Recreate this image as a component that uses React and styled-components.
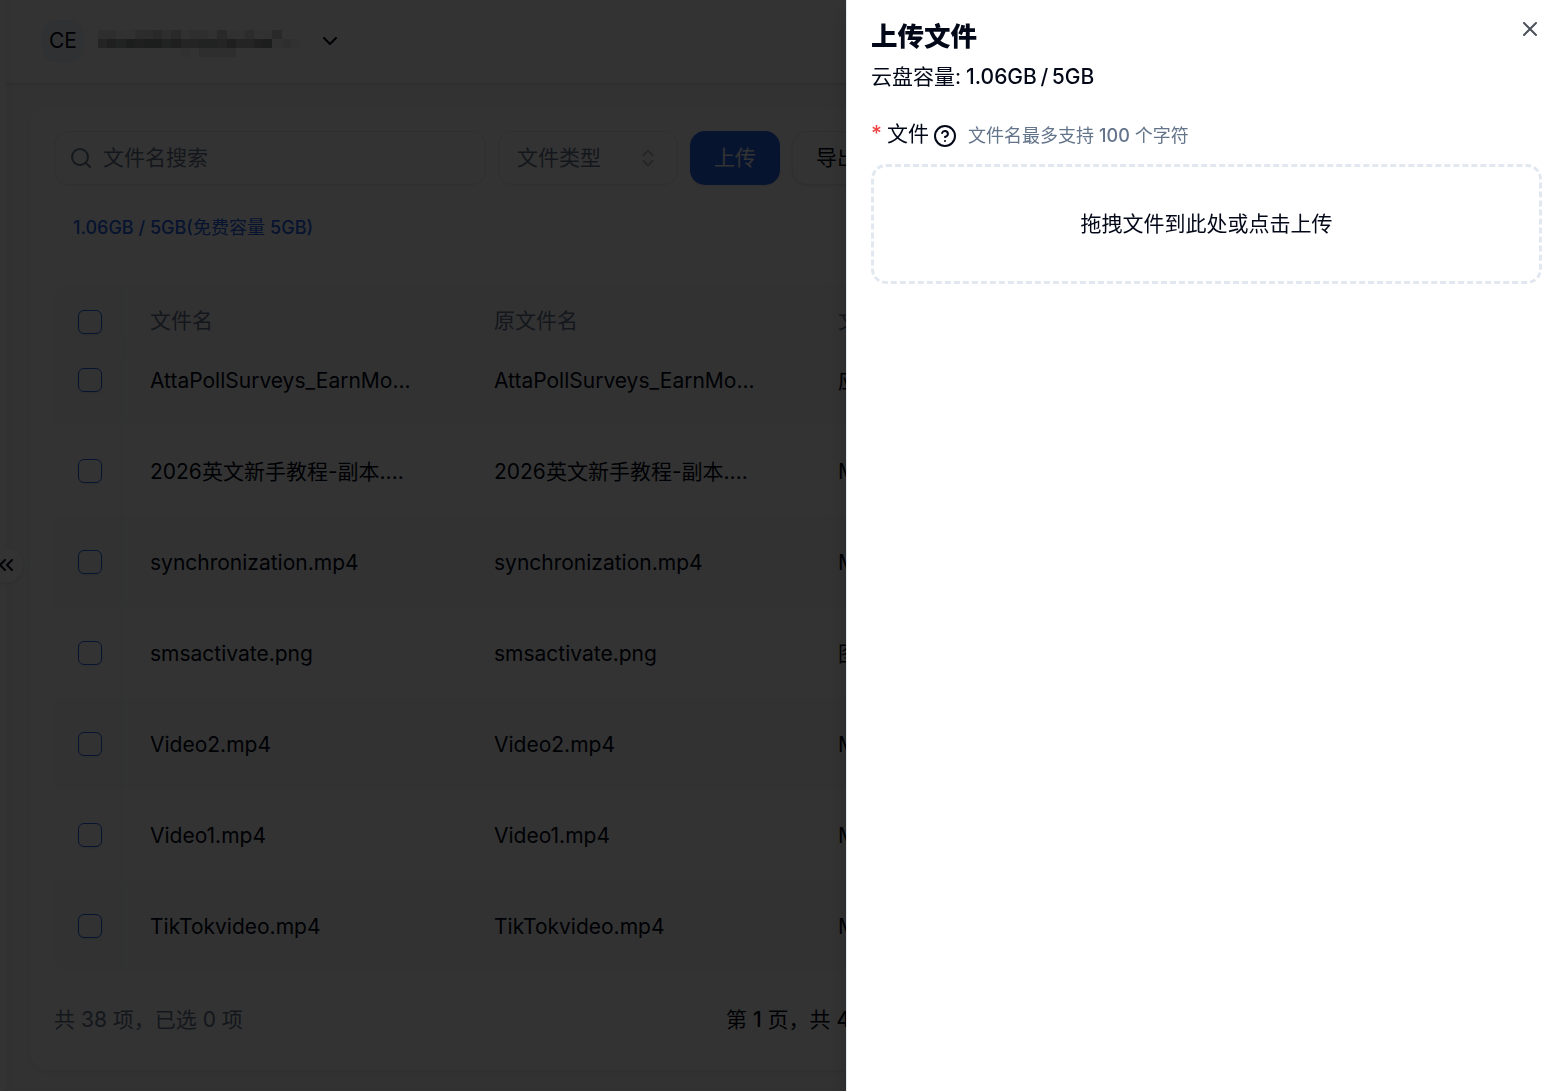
import React from "react";
import styled, { createGlobalStyle } from "styled-components";
import {
  ChevronDown,
  ChevronsLeft,
  ChevronsUpDown,
  CircleHelp,
  Search,
  X,
} from "lucide-react";

const GlobalStyle = createGlobalStyle`
  * {
    box-sizing: border-box;
  }
  body {
    margin: 0;
    overflow: hidden;
    background: #fff;
    color: #020817;
    font-family: Inter, "Noto Sans CJK SC", sans-serif;
    font-size: 21px;
    line-height: 30px;
  }
`;

const Page = styled.div`
  display: flex;
  width: 100vw;
  height: 100vh;
  overflow: hidden;
`;

const Sidebar = styled.aside`
  position: relative;
  flex: 0 0 6px;
  background: #fff;
  box-shadow: 3px 0 8px rgba(0, 0, 0, 0.06);
`;

const Main = styled.main`
  flex: 1;
  min-width: 0;
  display: flex;
  flex-direction: column;
  background: #f8fafc;
`;

const Header = styled.header`
  display: flex;
  align-items: center;
  flex: 0 0 83px;
  padding: 0 0 2px 36px;
  background: #fff;
  box-shadow: 0 1px 3px rgba(0, 0, 0, 0.16);
`;

const Avatar = styled.div`
  display: flex;
  align-items: center;
  justify-content: center;
  width: 42px;
  height: 42px;
  margin-right: 14px;
  border-radius: 14px;
  background: #f1f5f9;
`;

const Account = styled.div`
  display: grid;
  grid-template-columns: repeat(22, 1fr);
  grid-auto-rows: 9px;
  width: 202px;
  margin: 6px 18px 0 0;
`;

const Block = styled.span`
  background: rgba(15, 18, 24, ${(props) => props.$shade / 19});
`;

const Card = styled.section`
  flex: 1;
  display: flex;
  flex-direction: column;
  margin: 24px 24px 21px;
  padding: 24px;
  border-radius: 18px;
  background: #fff;
  box-shadow: 0 2px 6px rgba(0, 0, 0, 0.08);
`;

const Toolbar = styled.div`
  display: flex;
  gap: 12px;
`;

const Field = styled.div`
  display: flex;
  align-items: center;
  gap: 10px;
  width: ${(props) => props.$width}px;
  height: 54px;
  padding: 0 ${(props) => props.$pad}px;
  border: 1px solid #e2e8f0;
  border-radius: 15px;
  color: #64748b;
  box-shadow: 0 1px 2px rgba(0, 0, 0, 0.05);
`;

const FieldLabel = styled.span`
  flex: 1;
`;

const Button = styled.button`
  height: 54px;
  padding: 0 ${(props) => (props.$primary ? 24 : 23)}px;
  border: ${(props) => (props.$primary ? "0" : "1px solid #e2e8f0")};
  border-radius: 15px;
  background: ${(props) => (props.$primary ? "#2563eb" : "#fff")};
  color: ${(props) => (props.$primary ? "#f8fafc" : "#020817")};
  font: inherit;
  white-space: nowrap;
  box-shadow: 0 1px 3px rgba(0, 0, 0, 0.1);
`;

// Latin text sits at medium weight, the Chinese next to it stays regular
const Medium = styled.span`
  font-weight: 500;
`;

const Capacity = styled.div`
  margin: 29px 0 43px;
  padding-left: 19px;
  color: #2563eb;
  font-size: 18px;
  line-height: 27px;
`;

const Table = styled.div`
  flex: 0 0 686px;
  overflow: hidden;
  border-radius: 15px;
`;

const Row = styled.div`
  display: grid;
  grid-template-columns: 68px 344px 344px 344px;
  align-items: center;
  height: 91px;
  background: ${(props) => (props.$striped ? "#f8fafc" : "#fff")};
`;

const HeadRow = styled(Row)`
  height: 74px;
  margin-bottom: -24px;
  color: #64748b;
`;

const CheckCell = styled.div`
  display: flex;
  align-items: center;
  height: 100%;
  padding-left: 24px;
  border-right: 1px solid #f1f5f9;
  box-shadow: 3px 0 4px rgba(0, 0, 0, 0.02);
`;

const HeadCheckCell = styled(CheckCell)`
  padding-top: 2px;
`;

const Checkbox = styled.span`
  width: 24px;
  height: 24px;
  border: 1px solid #2563eb;
  border-radius: 6px;
  box-shadow: 0 1px 3px rgba(0, 0, 0, 0.1);
`;

const Cell = styled.div`
  padding: ${(props) => (props.$head ? 0 : 2)}px 0 0 28px;
  white-space: nowrap;
`;

const Footer = styled.footer`
  display: flex;
  justify-content: space-between;
  padding-top: 35px;
  color: #64748b;
`;

const PageInfo = styled.span`
  width: 792px;
  color: #020817;
`;

const Collapse = styled.div`
  position: absolute;
  top: 547px;
  left: -12px;
  display: flex;
  align-items: center;
  justify-content: center;
  width: 36px;
  height: 36px;
  border: 1px solid #f1f5f9;
  border-radius: 50%;
  background: #fff;
  box-shadow: 0 1px 3px rgba(0, 0, 0, 0.1);
`;

const Overlay = styled.div`
  position: fixed;
  inset: 0;
  background: rgba(0, 0, 0, 0.8);
`;

const Drawer = styled.aside`
  position: fixed;
  top: 0;
  right: 0;
  bottom: 0;
  width: 720px;
  padding: 20px 24px 24px;
  border-left: 1px solid #e2e8f0;
  background: #fff;
  box-shadow: 0 10px 22px rgba(0, 0, 0, 0.2);
`;

const Title = styled.h2`
  margin: 0;
  font-size: 26.5px;
  line-height: 32px;
  font-weight: 800;
`;

const Usage = styled.div`
  display: flex;
  gap: 5px;
  margin-top: 10px;
`;

const UsageValue = styled(Medium)`
  word-spacing: -2px;
`;

const Label = styled.div`
  display: flex;
  align-items: center;
  margin-top: 27px;
  height: 30px;
`;

const Required = styled.span`
  width: 16px;
  color: #ef4444;
  font-weight: 500;
`;

const HelpIcon = styled(CircleHelp)`
  margin: 4px 0 0 4px;
`;

const Hint = styled.span`
  margin: 3px 0 0 11px;
  color: #64748b;
  font-size: 18px;
`;

const DropZone = styled.div`
  display: flex;
  align-items: center;
  justify-content: center;
  height: 120px;
  margin-top: 15px;
  border: 3px dashed #e2e8f0;
  border-radius: 15px;
`;

const Close = styled.button`
  position: absolute;
  top: 17px;
  right: 24px;
  display: flex;
  padding: 0;
  border: 0;
  background: none;
  color: #020817;
  opacity: 0.7;
`;

// pixelated account name, one digit per block
const mosaic = [
  "2211334241221411311400",
  "6879899786677686689121",
  "0000000001022220000000",
];

const files = [
  ["AttaPollSurveys_EarnMo...", "应用"],
  ["2026英文新手教程-副本....", "MP4"],
  ["synchronization.mp4", "MP4"],
  ["smsactivate.png", "图片"],
  ["Video2.mp4", "MP4"],
  ["Video1.mp4", "MP4"],
  ["TikTokvideo.mp4", "MP4"],
];

function FileTable() {
  return (
    <Table>
      <HeadRow $striped>
        <HeadCheckCell>
          <Checkbox />
        </HeadCheckCell>
        <Cell $head>文件名</Cell>
        <Cell $head>原文件名</Cell>
        <Cell $head>文件类型</Cell>
      </HeadRow>
      {files.map(([name, type], i) => (
        <Row key={name} $striped={i % 2 === 0}>
          <CheckCell>
            <Checkbox />
          </CheckCell>
          <Cell>{name}</Cell>
          <Cell>{name}</Cell>
          <Cell>{type}</Cell>
        </Row>
      ))}
    </Table>
  );
}

function UploadDrawer() {
  return (
    <Drawer>
      <Title>上传文件</Title>
      <Usage>
        <span>云盘容量:</span>
        <UsageValue>1.06GB / 5GB</UsageValue>
      </Usage>
      <Label>
        <Required>*</Required>
        文件
        <HelpIcon size={24} />
        <Hint>
          文件名最多支持 <Medium>100</Medium> 个字符
        </Hint>
      </Label>
      <DropZone>拖拽文件到此处或点击上传</DropZone>
      <Close>
        <X size={24} />
      </Close>
    </Drawer>
  );
}

function App() {
  return (
    <>
      <GlobalStyle />
      <Page>
        <Sidebar />
        <Main>
          <Header>
            <Avatar>CE</Avatar>
            <Account>
              {mosaic
                .join("")
                .split("")
                .map((shade, i) => (
                  <Block key={i} $shade={shade} />
                ))}
            </Account>
            <ChevronDown size={24} />
          </Header>
          <Card>
            <Toolbar>
              <Field $width={432} $pad={14}>
                <Search size={24} />
                <FieldLabel>文件名搜索</FieldLabel>
              </Field>
              <Field $width={180} $pad={18}>
                <FieldLabel>文件类型</FieldLabel>
                <ChevronsUpDown size={22} opacity={0.5} />
              </Field>
              <Button $primary>上传</Button>
              <Button>导出</Button>
            </Toolbar>
            <Capacity>
              <Medium>1.06GB / 5GB(</Medium>免费容量 <Medium>5GB)</Medium>
            </Capacity>
            <FileTable />
            <Footer>
              <span>共 38 项，已选 0 项</span>
              <PageInfo>
                第 <Medium>1</Medium> 页，共 <Medium>4</Medium> 页
              </PageInfo>
            </Footer>
          </Card>
        </Main>
        <Collapse>
          <ChevronsLeft size={24} />
        </Collapse>
      </Page>
      <Overlay />
      <UploadDrawer />
    </>
  );
}

export default App;
